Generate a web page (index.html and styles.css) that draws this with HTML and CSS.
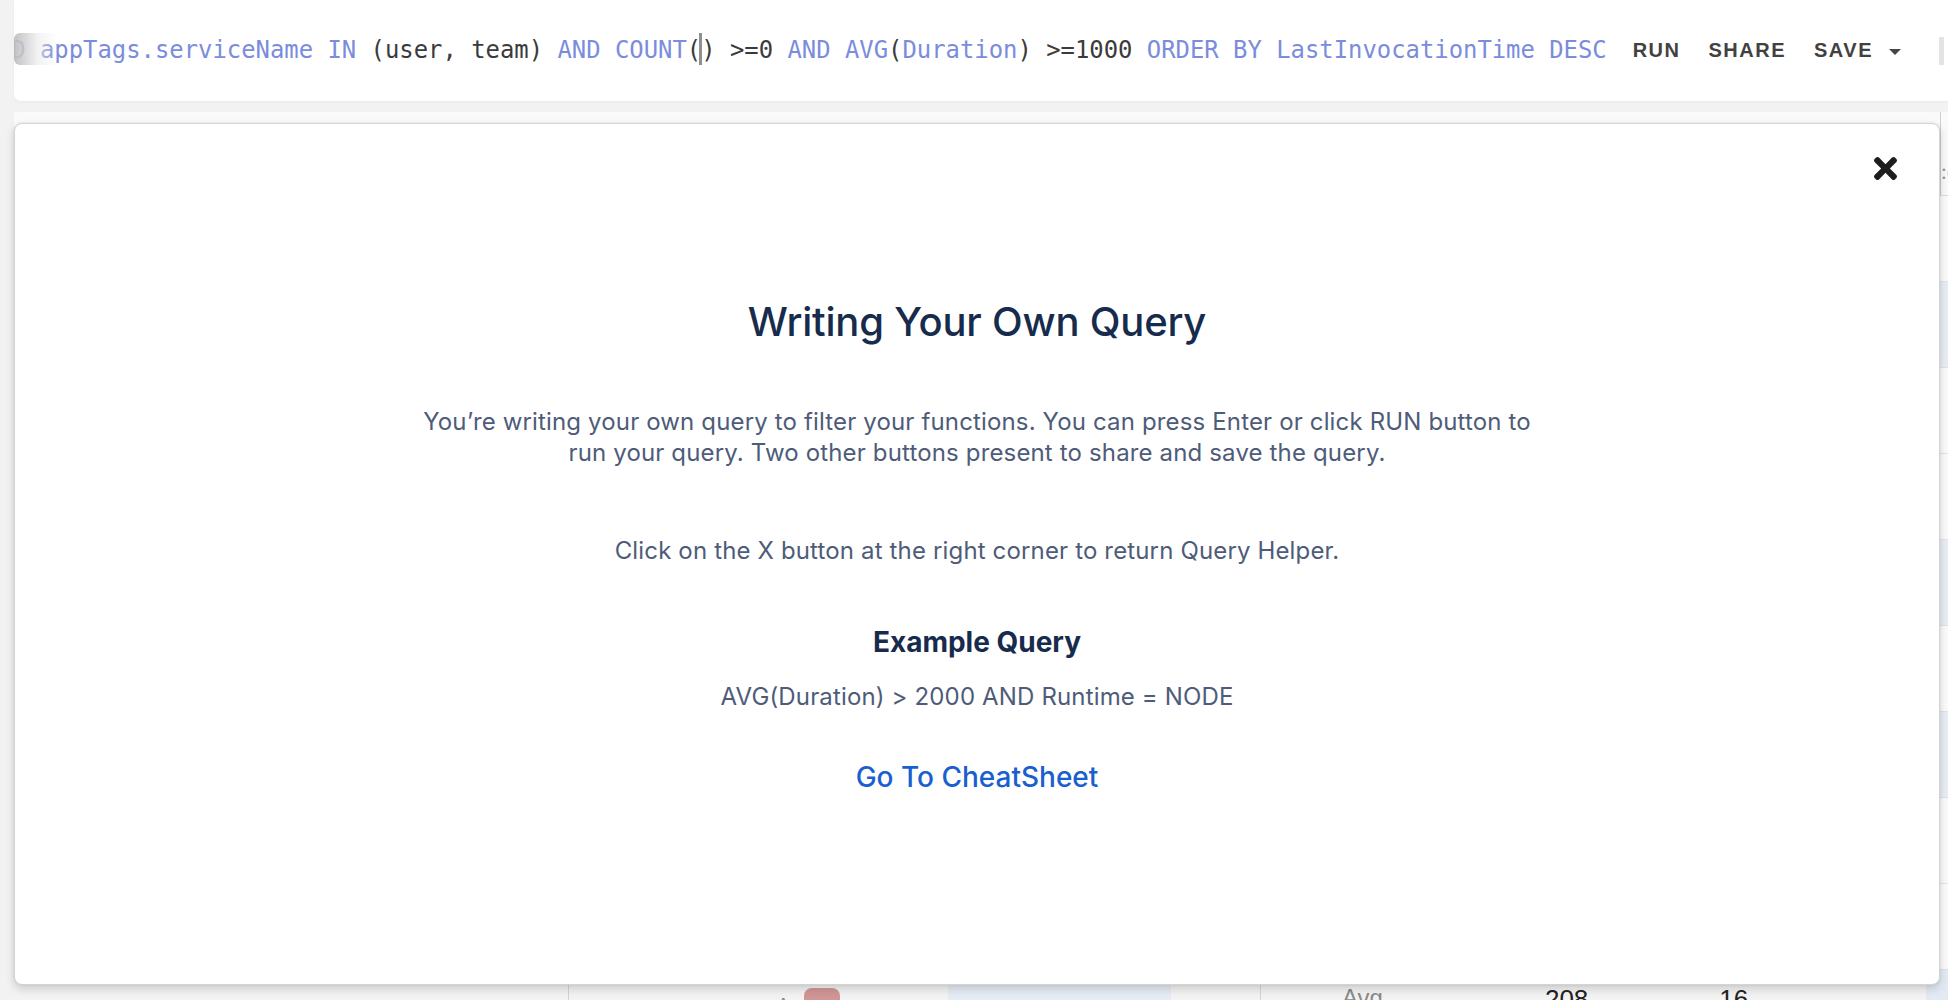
FILE: index.html
```html
<!DOCTYPE html>
<html lang="en">
<head>
<meta charset="utf-8">
<title>Writing Your Own Query</title>
<link rel="stylesheet" href="styles.css">
</head>
<body>
<div class="app">
  <header class="querybar">
    <div class="query-input">
      <div class="query-line"><span class="kw">AND</span> <span class="kw">appTags.serviceName</span> <span class="kw">IN</span> (user, team) <span class="kw">AND</span> <span class="kw">COUNT</span>(<span class="cursor"></span>) &gt;=0 <span class="kw">AND</span> <span class="kw">AVG</span>(<span class="kw">Duration</span>) &gt;=1000 <span class="kw">ORDER</span> <span class="kw">BY</span> <span class="kw">LastInvocationTime</span> <span class="kw">DESC</span></div>
      <div class="fade"></div>
    </div>
    <div class="actions">
      <button class="btn">RUN</button>
      <button class="btn">SHARE</button>
      <button class="btn">SAVE<span class="caret"></span></button>
    </div>
    <div class="divider"></div>
  </header>

  <main class="content">
    <div class="table">
      <div class="thead"><div class="cell c1"></div><div class="cell c2"></div><div class="cell c3"></div><div class="cell c4">:c</div></div>
      <div class="row"></div>
      <div class="row alt"></div>
      <div class="row"></div>
      <div class="row"></div>
      <div class="row alt"></div>
      <div class="row"></div>
      <div class="row alt"></div>
      <div class="row"></div>
      <div class="row"></div>
      <div class="row last">
        <div class="cell c1"></div>
        <div class="cell c2"><span class="sort">^</span><span class="badge">3</span><span class="bar"></span></div>
        <div class="cell c3"><span class="stat-label">Avg</span><span class="stat-val">208</span><span class="stat-val small">16</span></div>
        <div class="cell c4 blue"></div>
      </div>
    </div>
  </main>

  <section class="modal">
    <button class="close" aria-label="Close">
      <svg viewBox="0 80 352 352" width="25" height="23"><path d="M242.72 256l100.07-100.07c12.28-12.28 12.28-32.19 0-44.48l-22.24-22.24c-12.28-12.28-32.19-12.28-44.48 0L176 189.28 75.930 89.21c-12.28-12.28-32.19-12.28-44.48 0L9.21 111.45c-12.28 12.28-12.28 32.19 0 44.48L109.28 256 9.21 356.07c-12.28 12.28-12.28 32.19 0 44.48l22.24 22.24c12.28 12.28 32.2 12.28 44.48 0L176 322.72l100.07 100.07c12.28 12.28 32.2 12.28 44.48 0l22.24-22.24c12.28-12.28 12.28-32.19 0-44.48L242.72 256z" fill="#1d1d1d"/></svg>
    </button>
    <div class="modal-body">
      <h1 class="title">Writing Your Own Query</h1>
      <p class="text intro">You’re writing your own query to filter your functions. You can press Enter or click RUN button to<br>run your query. Two other buttons present to share and save the query.</p>
      <p class="text hint">Click on the X button at the right corner to return Query Helper.</p>
      <h2 class="subtitle">Example Query</h2>
      <p class="text example">AVG(Duration) &gt; 2000 AND Runtime = NODE</p>
      <a class="link" href="#">Go To CheatSheet</a>
    </div>
  </section>
</div>
</body>
</html>
```

FILE: styles.css
```css
* { box-sizing: border-box; }

html, body {
  margin: 0;
  padding: 0;
}

body {
  width: 1948px;
  height: 1000px;
  overflow: hidden;
  background: #f2f2f2;
  font-family: "Inter", "Noto Sans", sans-serif;
}

.app {
  position: relative;
  width: 1948px;
  height: 1000px;
  display: flex;
  flex-direction: column;
}

/* ---------- query bar ---------- */
.querybar {
  margin-left: 14px;
  height: 101px;
  background: #ffffff;
  border-radius: 0 0 0 7px;
  display: flex;
  align-items: center;
  box-shadow: 0 1px 3px rgba(0, 0, 0, 0.04);
  flex: none;
}

.query-input {
  position: relative;
  flex: 1;
  min-width: 0;
  height: 100%;
  overflow: hidden;
  display: flex;
  align-items: center;
}

.query-line {
  white-space: nowrap;
  font-family: "DejaVu Sans Mono", "Liberation Mono", monospace;
  font-size: 23.88px;
  line-height: 32px;
  color: #3b3b3b;
  margin-left: -31.6px;
  margin-top: -2px;
}

.kw { color: #7b8cdd; }

.cursor {
  display: inline-block;
  width: 0;
  height: 32px;
  border-left: 3px solid rgba(125, 125, 125, 0.85);
  margin-left: -2px;
  margin-right: -1px;
  vertical-align: -7px;
}

.fade {
  position: absolute;
  left: 0;
  top: 33px;
  width: 44px;
  height: 32px;
  border-radius: 6px 0 0 6px;
  background: linear-gradient(to right, rgba(190, 190, 190, 0.95), rgba(235, 235, 235, 0.6) 55%, rgba(255, 255, 255, 0));
}

.actions {
  display: flex;
  align-items: center;
  flex: none;
}

.btn {
  border: 0;
  background: transparent;
  padding: 0 14px;
  font-family: "Liberation Sans", Arial, sans-serif;
  font-weight: 700;
  font-size: 20px;
  letter-spacing: 1.5px;
  color: #414141;
  display: flex;
  align-items: center;
  height: 40px;
}

.caret {
  display: inline-block;
  width: 0;
  height: 0;
  margin-left: 16px;
  border-left: 6px solid transparent;
  border-right: 6px solid transparent;
  border-top: 6px solid #454545;
  margin-top: 2px;
}

.divider {
  flex: none;
  width: 5px;
  height: 28px;
  margin-left: 24px;
  margin-right: 4px;
  background: #e3e3e3;
  border-radius: 1px;
}

/* ---------- background table ---------- */
.content {
  flex: 1;
  margin: 11px 0 0 14px;
  min-height: 0;
}

.table {
  display: flex;
  flex-direction: column;
  background: #f7f7f7;
  height: 100%;
}

.thead {
  height: 84px;
  display: flex;
  background: #fafafa;
  border-bottom: 1px solid #dcdcdc;
  flex: none;
}

.row {
  height: 86px;
  flex: none;
  border-bottom: 1px solid #e2e2e2;
  background: #fbfbfb;
  display: flex;
}

.row.alt { background: #e9eef5; }

.row.last {
  height: auto;
  flex: 1;
  border-bottom: 0;
  background: #f3f3f3;
}

.cell { height: 100%; }
.c1 { width: 555px; border-right: 1px solid #d4d4d4; }
.c2 {
  width: 692px;
  border-right: 1px solid #d4d4d4;
  display: flex;
  align-items: flex-start;
  padding-top: 18px;
}
.c3 {
  flex: 1;
  display: flex;
  align-items: flex-start;
  padding-top: 14px;
  font-family: "Liberation Sans", Arial, sans-serif;
}
.c4 {
  width: 8px;
  border-left: 1px solid #d0d0d0;
  color: #999;
  font-size: 20px;
  overflow: hidden;
  padding-top: 48px;
}
.thead .c1, .thead .c2 { border-right: 0; }
.thead .c3 { flex: 1; }
.c4.blue { width: 22px; background: #e3eaf4; border-left: 0; }

.sort {
  margin-left: 211px;
  font-size: 14px;
  color: #777;
  width: 24px;
  padding-top: 6px;
}
.badge {
  width: 36px;
  height: 30px;
  padding-top: 14px;
  border-radius: 8px;
  background: #d19696;
  color: #fff;
  font-size: 14px;
  text-align: center;
}
.bar {
  margin-left: 108px;
  width: 223px;
  height: 40px;
  margin-top: -14px;
  background: #e6ecf5;
}
.stat-label {
  margin-left: 81px;
  font-size: 24px;
  color: #8a8a8a;
}
.stat-val {
  margin-left: 162px;
  font-size: 26px;
  color: #222;
}
.stat-val.small { margin-left: 131px; }

/* ---------- modal ---------- */
.modal {
  position: absolute;
  left: 14px;
  top: 123px;
  width: 1926px;
  height: 862px;
  background: #ffffff;
  border: 1px solid #d4d4d4;
  border-radius: 8px;
  box-shadow: 0 4px 10px rgba(0, 0, 0, 0.16), 0 0 3px rgba(0, 0, 0, 0.08);
}

.close {
  position: absolute;
  top: 33px;
  right: 41px;
  padding: 0;
  border: 0;
  background: transparent;
  display: flex;
}

.modal-body {
  display: flex;
  flex-direction: column;
  align-items: center;
  text-align: center;
  padding-top: 174px;
}

.title {
  margin: 0;
  font-size: 40px;
  line-height: 48px;
  font-weight: 500;
  color: #172b4d;
  letter-spacing: -0.2px;
}

.text {
  margin: 0;
  font-size: 24px;
  line-height: 31px;
  font-weight: 400;
  color: #4e5c79;
  letter-spacing: 0.15px;
}

.intro { margin-top: 60px; }
.hint { margin-top: 67px; }

.subtitle {
  margin: 59px 0 0;
  font-size: 28px;
  line-height: 34px;
  font-weight: 700;
  color: #172b4d;
}

.example { margin-top: 22px; }

.link {
  margin-top: 48px;
  font-size: 28px;
  line-height: 34px;
  font-weight: 500;
  color: #1a5fd0;
  text-decoration: none;
}
```
